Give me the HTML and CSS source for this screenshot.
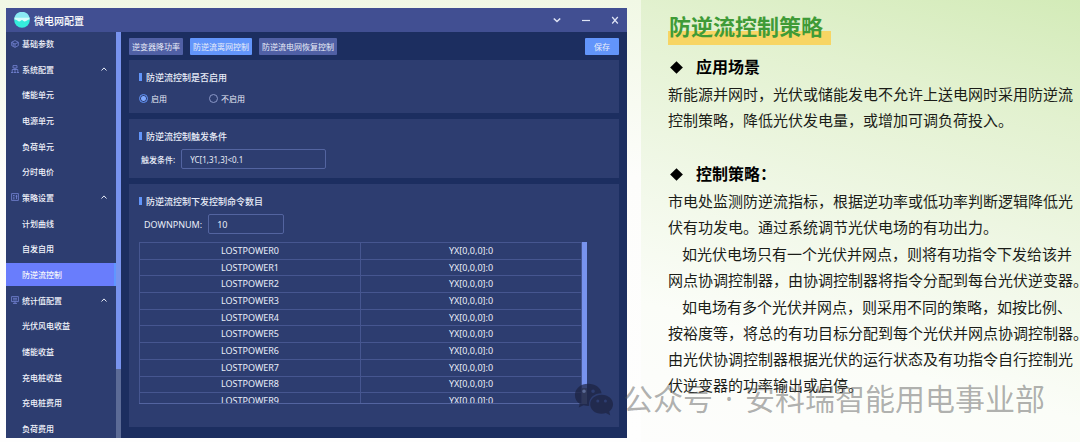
FILE: index.html
```html
<!DOCTYPE html>
<html lang="zh-CN">
<head>
<meta charset="utf-8">
<title>微电网配置</title>
<link rel="stylesheet" href="styles.css">
</head>
<body>
<main class="slide">
  <section class="stage">
    <div class="window">
      <header class="titlebar">
        <svg class="logo" viewBox="0 0 16 16" aria-hidden="true"><circle cx="8" cy="8" r="7.8" fill="#35eddc"/><path d="M.5 5.500A7.800 7.800 0 0 1 15.500 5.500z" fill="#8be9f3"/><path d="M.4 5.500H15.600V7.600C13.500 7.400 12.500 9.600 10.500 9.400S9 8 8 8 6.500 9.600 5 9.400 2.500 7.400.4 7.600z" fill="#d5fbfb"/></svg>
        <h1 class="app-name">微电网配置</h1>
        <div class="window-controls">
          <button class="control" aria-label="展开"><svg viewBox="0 0 8 8"><path d="M.8 2.500 4 5.500 7.200 2.500" stroke-width="1.600"/></svg></button>
          <button class="control" aria-label="最小化"><svg viewBox="0 0 8 8"><path d="M0 4.500H8"/></svg></button>
          <button class="control" aria-label="关闭"><svg viewBox="0 0 8 8"><path d="M1.200 1 6.800 7.500M6.800 1 1.200 7.500"/></svg></button>
        </div>
      </header>
      <div class="workspace">
        <nav class="sidebar">
          <ul class="menu">
            <li class="item group"><svg class="icon" viewBox="0 0 8 8"><path d="M4 .6 7.300 2.200V5.600L4 7.400.7 5.600V2.200zM.7 2.400 4 4 7.300 2.400M4 4V7.200M2.200 3.200V6"/></svg><a href="#">基础参数</a></li>
            <li class="item group"><svg class="icon" viewBox="0 0 8 8"><path d="M2 .6H6V3H2zM4 3V7.500M1.200 7.500V4.500H6.800V7.500M0 7.500H2.400M3 7.500H5M5.600 7.500H8"/></svg><a href="#">系统配置</a><svg class="fold" viewBox="0 0 6 4"><path d="M.5 3.500 3 .9 5.500 3.500"/></svg></li>
            <li class="item"><a href="#">储能单元</a></li>
            <li class="item"><a href="#">电源单元</a></li>
            <li class="item"><a href="#">负荷单元</a></li>
            <li class="item"><a href="#">分时电价</a></li>
            <li class="item group"><svg class="icon" viewBox="0 0 8 8"><path d="M.6.6H7.400V7.400H.6zM2 2.500H3.600M2 4.200H3.600M2 5.800H3.600M5.500 2V6M4.600 3.200H6.400"/></svg><a href="#">策略设置</a><svg class="fold" viewBox="0 0 6 4"><path d="M.5 3.500 3 .9 5.500 3.500"/></svg></li>
            <li class="item"><a href="#">计划曲线</a></li>
            <li class="item"><a href="#">自发自用</a></li>
            <li class="item active"><a href="#">防逆流控制</a></li>
            <li class="item group"><svg class="icon" viewBox="0 0 8 8"><path d="M.6.6H7.400V5.600H.6zM2 2.300H6M2 3.900H6M4 5.600V7.400M2 7.400H6"/></svg><a href="#">统计值配置</a><svg class="fold" viewBox="0 0 6 4"><path d="M.5 3.500 3 .9 5.500 3.500"/></svg></li>
            <li class="item"><a href="#">光伏风电收益</a></li>
            <li class="item"><a href="#">储能收益</a></li>
            <li class="item"><a href="#">充电桩收益</a></li>
            <li class="item"><a href="#">充电桩费用</a></li>
            <li class="item"><a href="#">负荷费用</a></li>
          </ul>
          <div class="scroll"><div class="thumb"></div></div>
        </nav>
        <div class="content">
          <div class="toolbar">
            <button class="tab">逆变器降功率</button>
            <button class="tab current">防逆流离网控制</button>
            <button class="tab">防逆流电网恢复控制</button>
            <button class="tab current save">保存</button>
          </div>
          <section class="card">
            <h2 class="card-title">防逆流控制是否启用</h2>
            <div class="radios">
              <label class="radio"><input type="radio" name="enable" checked>启用</label>
              <label class="radio"><input type="radio" name="enable">不启用</label>
            </div>
          </section>
          <section class="card">
            <h2 class="card-title">防逆流控制触发条件</h2>
            <div class="field"><label for="trigger">触发条件:</label><input class="box wide" id="trigger" type="text" value="YC[1,31,3]&lt;0.1"></div>
          </section>
          <section class="card commands">
            <h2 class="card-title">防逆流控制下发控制命令数目</h2>
            <div class="field count"><label for="downpnum">DOWNPNUM:</label><input class="box" id="downpnum" type="text" value="10"></div>
            <div class="list">
              <div class="viewport">
                <table>
                  <tbody>
                    <tr><td>LOSTPOWER0</td><td>YX[0,0,0]:0</td></tr>
                    <tr><td>LOSTPOWER1</td><td>YX[0,0,0]:0</td></tr>
                    <tr><td>LOSTPOWER2</td><td>YX[0,0,0]:0</td></tr>
                    <tr><td>LOSTPOWER3</td><td>YX[0,0,0]:0</td></tr>
                    <tr><td>LOSTPOWER4</td><td>YX[0,0,0]:0</td></tr>
                    <tr><td>LOSTPOWER5</td><td>YX[0,0,0]:0</td></tr>
                    <tr><td>LOSTPOWER6</td><td>YX[0,0,0]:0</td></tr>
                    <tr><td>LOSTPOWER7</td><td>YX[0,0,0]:0</td></tr>
                    <tr><td>LOSTPOWER8</td><td>YX[0,0,0]:0</td></tr>
                    <tr><td>LOSTPOWER9</td><td>YX[0,0,0]:0</td></tr>
                  </tbody>
                </table>
              </div>
              <div class="scroll"><div class="thumb"></div></div>
            </div>
          </section>
        </div>
      </div>
    </div>
  </section>
  <article class="notes">
    <h2 class="headline">防逆流控制策略</h2>
    <h3 class="topic">应用场景</h3>
    <p>新能源并网时，光伏或储能发电不允许上送电网时采用防逆流<br>控制策略，降低光伏发电量，或增加可调负荷投入。</p>
    <h3 class="topic spaced">控制策略：</h3>
    <p>市电处监测防逆流指标，根据逆功率或低功率判断逻辑降低光<br>伏有功发电。通过系统调节光伏电场的有功出力。</p>
    <p class="indent">如光伏电场只有一个光伏并网点，则将有功指令下发给该并<br>网点协调控制器，由协调控制器将指令分配到每台光伏逆变器。</p>
    <p class="indent">如电场有多个光伏并网点，则采用不同的策略，如按比例、<br>按裕度等，将总的有功目标分配到每个光伏并网点协调控制器。<br>由光伏协调控制器根据光伏的运行状态及有功指令自行控制光<br>伏逆变器的功率输出或启停。</p>
  </article>
  <div class="watermark">
    <svg class="wechat" viewBox="0 0 42 34" aria-hidden="true"><path fill-rule="evenodd" d="M15 1C7 1 1 6 1 13c0 4 2 7 5 9l-1 4 5-2.500c2 .6 4 .8 6 .7C15 16 21 11 29 11 28 5 22 1 15 1zM10.500 7a1.900 1.900 0 1 1 0 3.800 1.900 1.900 0 0 1 0-3.800zM20 7a1.900 1.900 0 1 1 0 3.800A1.900 1.900 0 0 1 20 7z"/><path fill-rule="evenodd" d="M29 12.500c-7 0-12 4.500-12 10s5 10 12 10c1.500 0 3-.2 4.500-.7L38 34l-1-4c2.500-1.800 4-4.500 4-7.500 0-5.500-5-10-12-10zM25 17.500a1.600 1.600 0 1 1 0 3.200 1.600 1.600 0 0 1 0-3.200zM33 17.500a1.600 1.600 0 1 1 0 3.200 1.600 1.600 0 0 1 0-3.200z"/></svg>
    <span>公众号</span><span>·</span><span>安科瑞智能用电事业部</span>
  </div>
</main>
</body>
</html>
```
FILE: styles.css
```css
* { box-sizing: border-box; }

body {
  margin: 0;
  font-family: "Noto Sans", "Noto Sans CJK SC", sans-serif;
  background: linear-gradient(#f1f8e5, #fdfdfb 40%, #fefefe);
}

h1, h2, h3, p, ul { margin: 0; padding: 0; }
button, input { font: inherit; color: inherit; }
a { color: inherit; text-decoration: none; }

.slide {
  position: relative;
  display: grid;
  grid-template-columns: minmax(0, 641fr) minmax(0, 439fr);
  min-height: 100vh;
}

.stage {
  display: flex;
  padding: 8px 14px 4px 6px;
}

.window {
  flex: 1;
  display: flex;
  flex-direction: column;
  color: #e9edf8;
  background: #1c2e60;
  font-size: 8px;
}

.titlebar {
  display: flex;
  align-items: center;
  gap: 4px;
  height: 24px;
  padding: 0 8px;
  background: #414f92;
}
.logo { width: 16px; height: 16px; }
.app-name { font-size: 10px; font-weight: 500; color: #fff; }
.window-controls { display: flex; gap: 21px; margin-left: auto; }
.control {
  display: flex;
  padding: 0;
  border: 0;
  background: none;
}
.control svg { width: 8px; height: 8px; fill: none; stroke: #dfe4f5; stroke-width: 1.2; }

.workspace { flex: 1; display: flex; }

.sidebar {
  flex: 0 0 115px;
  display: flex;
  overflow: hidden;
  background: #2d3d70;
}
.menu {
  flex: 1;
  display: flex;
  flex-direction: column;
  justify-content: space-between;
  margin-bottom: -2px;
  list-style: none;
}
.item {
  display: flex;
  align-items: center;
  height: 23px;
  padding: 0 9px 0 16px;
  font-weight: 500;
  color: #f2f4fb;
}
.group { padding-left: 5px; gap: 3px; }
.active { background: #697dfc; border-right: 2px solid #6096ff; }
.icon { width: 8px; height: 8px; fill: none; stroke: #7686d8; stroke-width: 0.8; }
.fold { width: 6px; height: 4px; margin-left: auto; fill: none; stroke: #e9edf8; }

.scroll { flex: 0 0 5px; background: #5c6b96; }
.thumb { height: 83%; background: #7893ee; }

.content {
  flex: 1;
  display: flex;
  flex-direction: column;
  gap: 6px;
  padding: 6px 8px 11px;
}

.toolbar { display: flex; gap: 7px; height: 17px; margin-bottom: -1px; }
.tab {
  padding: 0 3px;
  border: 0;
  border-radius: 1px;
  background: #5060a5;
  line-height: 17px;
  white-space: nowrap;
}
.current { background: #6295fb; }
.save { margin-left: auto; padding: 0 9px; }

.card {
  padding: 10px 32px 8px 10px;
  background: #2d3d70;
}
.card-title {
  display: flex;
  align-items: center;
  gap: 4px;
  height: 14px;
  font-size: 9px;
  font-weight: 500;
}
.card-title::before {
  content: "";
  width: 3px;
  height: 8px;
  background: #6295fb;
}

.radios { display: flex; gap: 42px; padding-top: 8px; }
.radio { display: flex; align-items: center; gap: 3px; height: 13px; }
.radio input {
  appearance: none;
  width: 9px;
  height: 9px;
  margin: 0;
  border: 1px solid #8b98c8;
  border-radius: 50%;
}
.radio input:checked {
  border-color: #6295fb;
  background: radial-gradient(#7fa9ff 0 2px, transparent 3px);
}

.field {
  display: flex;
  align-items: center;
  gap: 6px;
  padding: 6px 0 1px 2px;
  font-weight: 500;
}
.box {
  width: 76px;
  height: 20px;
  padding: 0 8px;
  border: 1px solid #5364a0;
  border-radius: 2px;
  background: transparent;
  font-weight: 400;
}
.wide { width: 145px; }
.count { padding-left: 5px; font-size: 9px; font-weight: 400; }

.commands { flex: 1; }
.list { display: flex; height: 162px; margin-top: 7px; }
.viewport {
  flex: 1;
  overflow: hidden;
  border-bottom: 1px solid #5364a0;
}
.list .thumb { height: 90%; }
table {
  width: 100%;
  height: 168px;
  border-collapse: collapse;
  table-layout: fixed;
  font-size: 9px;
  line-height: 12px;
}
td {
  padding: 0;
  border: 1px solid #465690;
  text-align: center;
}

.notes {
  padding: 11px 0 0 27px;
  background: linear-gradient(195deg, #d3ebb8, #e2f1cf 22%, #f1f8e8 52%, #fbfdf8 75%, #fdfdfc);
  color: #1b1d18;
  font-size: 15px;
  line-height: 26px;
  white-space: nowrap;
}
.headline {
  width: 163px;
  height: 34px;
  padding: 0 1px;
  background: linear-gradient(transparent 20px, #f7d564 20px);
  color: #3f9b37;
  font-size: 22px;
  line-height: 30px;
}
.topic {
  display: flex;
  gap: 13px;
  padding: 9px 0 0 2px;
  font-size: 16px;
  color: #000;
}
.topic::before {
  content: "";
  width: 9px;
  height: 9px;
  margin: 9px 2px;
  background: #000;
  transform: rotate(45deg);
}
.spaced { margin-top: 19px; }
.notes p { margin-bottom: 1px; }
.notes .indent { text-indent: 14px; }

.watermark {
  position: absolute;
  right: 35px;
  bottom: 21px;
  display: flex;
  align-items: center;
  gap: 12px;
  font-size: 30px;
  line-height: 44px;
  white-space: nowrap;
  color: rgba(80, 80, 80, 0.45);
}
.wechat { width: 40px; height: 34px; margin-right: -3px; fill: rgba(28, 34, 64, 0.7); }
```
